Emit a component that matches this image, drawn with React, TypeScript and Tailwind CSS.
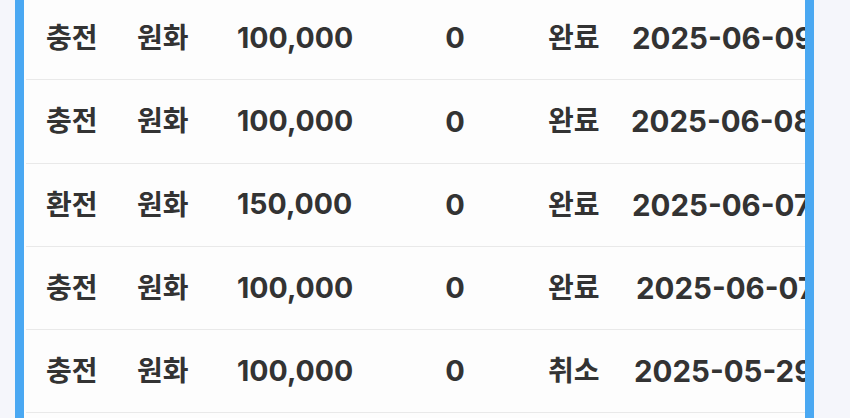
import React from "react";

type Row = { type: string; cur: string; amt: string; fee: string; status: string; date: string; pad: string };

const rows: Row[] = [
  { type: "충전", cur: "원화", amt: "100,000", fee: "0", status: "완료", date: "2025-06-09", pad: "pl-[1px]" },
  { type: "충전", cur: "원화", amt: "100,000", fee: "0", status: "완료", date: "2025-06-08", pad: "pl-0" },
  { type: "환전", cur: "원화", amt: "150,000", fee: "0", status: "완료", date: "2025-06-07", pad: "pl-[1px]" },
  { type: "충전", cur: "원화", amt: "100,000", fee: "0", status: "완료", date: "2025-06-07", pad: "pl-[5px]" },
  { type: "충전", cur: "원화", amt: "100,000", fee: "0", status: "취소", date: "2025-05-29", pad: "pl-[3px]" },
];

export default function App() {
  return (
    <div
      className="w-[850px] h-[418px] overflow-hidden bg-[#f5f6fb] flex"
      style={{ fontFamily: 'Inter, "Noto Sans CJK KR", "Noto Sans", sans-serif' }}
    >
      <div className="w-[15px] shrink-0" />
      <div className="w-[799px] shrink-0 h-full bg-[#fdfdfd] border-x-[9px] border-[#4aa8f2] overflow-hidden">
        <div className="-mt-[3px] pl-[2px]">
          {rows.map((r, i) => (
            <div
              key={i}
              className="h-[83.25px] border-b border-[#e9e9e9] flex items-center whitespace-nowrap text-[28px] font-bold text-[#333333] pl-[20px]"
            >
              <div className="w-[91px] shrink-0">{r.type}</div>
              <div className="w-[100px] shrink-0">{r.cur}</div>
              <div className="w-[160px] shrink-0 text-[28.5px]">{r.amt}</div>
              <div className="w-[116px] shrink-0 text-center text-[29px]">{r.fee}</div>
              <div className="w-[118px] shrink-0 pl-[35px]">{r.status}</div>
              <div className={`flex-1 overflow-hidden text-[29.5px] ${r.pad}`}>{r.date}</div>
            </div>
          ))}
        </div>
      </div>
    </div>
  );
}
